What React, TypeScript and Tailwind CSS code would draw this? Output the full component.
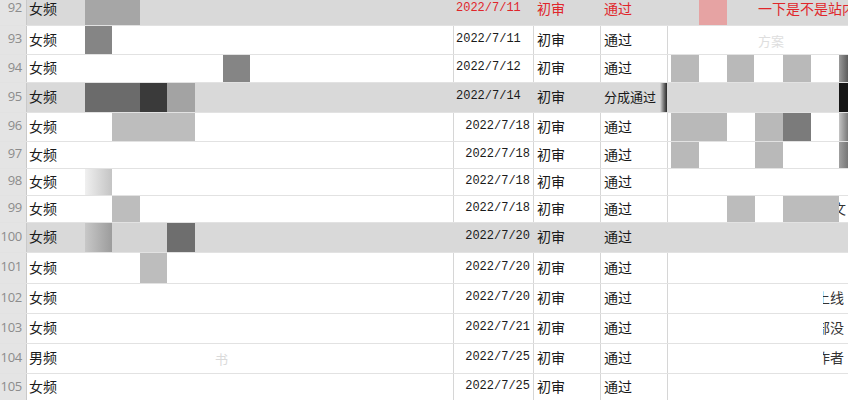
import React from "react";

type Seg = { w: string; c: string; t?: string };

type Row = {
    n: number;
    h: string;
    cat: string;
    date: string;
    stage: string;
    result: string;
    hl?: boolean;
    red?: boolean;
    dateLeft?: boolean;
    mid: Seg[];
    right: Seg[];
    tail?: string;
    edge?: boolean;
};

const rows: Row[] = [
    {
        n: 92, h: "h-[33px]", cat: "女频", date: "2022/7/11", stage: "初审", result: "通过", hl: true, red: true, dateLeft: true,
        mid: [{w: "w-[55px]", c: "bg-[#a6a6a6]"}],
        right: [{w: "w-[31px]", c: ""}, {w: "w-[28px]", c: "bg-[#e6a3a3]"}, {w: "w-[31px]", c: ""}],
        tail: "一下是不是站内",
    },
    {
        n: 93, h: "h-[29px]", cat: "女频", date: "2022/7/11", stage: "初审", result: "通过", dateLeft: true,
        mid: [{w: "w-[27px]", c: "bg-[#858585]"}],
        right: [{w: "w-[90px]", c: ""}, {w: "w-[40px]", c: "text-[#dedede] text-[11px]", t: "方案"}],
    },
    {
        n: 94, h: "h-[28px]", cat: "女频", date: "2022/7/12", stage: "初审", result: "通过", dateLeft: true,
        mid: [{w: "w-[138px]", c: ""}, {w: "w-[27px]", c: "bg-[#858585]"}],
        right: [
            {w: "w-[3px]", c: ""}, {w: "w-[28px]", c: "bg-[#b9b9b9]"}, {w: "w-[28px]", c: ""},
            {w: "w-[27px]", c: "bg-[#b9b9b9]"}, {w: "w-[29px]", c: ""}, {w: "w-[28px]", c: "bg-[#b9b9b9]"},
            {w: "w-[28px]", c: ""}, {w: "flex-1", c: "bg-gradient-to-r from-[#9a9a9a] to-[#5c5c5c]"},
        ],
    },
    {
        n: 95, h: "h-[30px]", cat: "女频", date: "2022/7/14", stage: "初审", result: "分成通过", hl: true, dateLeft: true, edge: true,
        mid: [{w: "w-[55px]", c: "bg-[#6b6b6b]"}, {w: "w-[27px]", c: "bg-[#3a3a3a]"}, {w: "w-[28px]", c: "bg-[#a3a3a3]"}],
        right: [{w: "w-[171px]", c: ""}, {w: "flex-1", c: "bg-[#151515]"}],
    },
    {
        n: 96, h: "h-[29px]", cat: "女频", date: "2022/7/18", stage: "初审", result: "通过",
        mid: [{w: "w-[27px]", c: ""}, {w: "w-[83px]", c: "bg-[#bdbdbd]"}],
        right: [
            {w: "w-[3px]", c: ""}, {w: "w-[56px]", c: "bg-[#b9b9b9]"}, {w: "w-[28px]", c: ""},
            {w: "w-[28px]", c: "bg-[#b9b9b9]"}, {w: "w-[28px]", c: "bg-[#7b7b7b]"}, {w: "w-[28px]", c: ""},
            {w: "flex-1", c: "bg-gradient-to-r from-[#c4c4c4] to-[#7a7a7a]"},
        ],
    },
    {
        n: 97, h: "h-[27px]", cat: "女频", date: "2022/7/18", stage: "初审", result: "通过",
        mid: [],
        right: [
            {w: "w-[3px]", c: ""}, {w: "w-[28px]", c: "bg-[#b9b9b9]"}, {w: "w-[56px]", c: ""},
            {w: "w-[28px]", c: "bg-[#b9b9b9]"}, {w: "w-[56px]", c: ""},
            {w: "flex-1", c: "bg-gradient-to-r from-[#a0a0a0] to-[#777777]"},
        ],
    },
    {
        n: 98, h: "h-[27px]", cat: "女频", date: "2022/7/18", stage: "初审", result: "通过",
        mid: [{w: "w-[27px]", c: "bg-gradient-to-r from-[#f0f0f0] to-[#c4c4c4]"}],
        right: [],
    },
    {
        n: 99, h: "h-[27px]", cat: "女频", date: "2022/7/18", stage: "初审", result: "通过",
        mid: [{w: "w-[27px]", c: ""}, {w: "w-[28px]", c: "bg-[#bdbdbd]"}],
        right: [
            {w: "w-[59px]", c: ""}, {w: "w-[28px]", c: "bg-[#bcbcbc]"}, {w: "w-[28px]", c: ""},
            {w: "w-[56px]", c: "bg-[#bcbcbc]"},
        ],
        tail: "文",
    },
    {
        n: 100, h: "h-[30px]", cat: "女频", date: "2022/7/20", stage: "初审", result: "通过", hl: true,
        mid: [{w: "w-[27px]", c: "bg-gradient-to-r from-[#c8c8c8] to-[#9c9c9c]"}, {w: "w-[55px]", c: "bg-[#d4d4d4]"}, {w: "w-[28px]", c: "bg-[#6e6e6e]"}],
        right: [],
    },
    {
        n: 101, h: "h-[31px]", cat: "女频", date: "2022/7/20", stage: "初审", result: "通过",
        mid: [{w: "w-[55px]", c: ""}, {w: "w-[27px]", c: "bg-[#bdbdbd]"}],
        right: [],
    },
    {
        n: 102, h: "h-[30px]", cat: "女频", date: "2022/7/20", stage: "初审", result: "通过",
        mid: [], right: [{w: "w-[155px]", c: ""}], tail: "上线",
    },
    {
        n: 103, h: "h-[30px]", cat: "女频", date: "2022/7/21", stage: "初审", result: "通过",
        mid: [], right: [{w: "w-[155px]", c: ""}], tail: "部没",
    },
    {
        n: 104, h: "h-[30px]", cat: "男频", date: "2022/7/25", stage: "初审", result: "通过",
        mid: [{w: "w-[130px]", c: ""}, {w: "w-[20px]", c: "text-[#dadada]", t: "书"}],
        right: [{w: "w-[155px]", c: ""}], tail: "作者",
    },
    {
        n: 105, h: "h-[28px]", cat: "女频", date: "2022/7/25", stage: "初审", result: "通过",
        mid: [], right: [],
    },
];

const Segs = ({segs}: { segs: Seg[] }) => (
    <>
        {segs.map((s, i) => (
            <div key={i} className={`${s.w} ${s.c} h-full shrink-0 flex items-center text-[13px] overflow-hidden`}>
                {s.t}
            </div>
        ))}
    </>
);

const SheetRow = ({r}: { r: Row }) => {
    const bg = r.hl ? "bg-[#d9d9d9]" : "bg-white";
    const ink = r.red ? "text-[#e0262b]" : "text-[#1a1a1a]";
    const vline = r.hl ? "border-transparent" : "border-[#d6d6d6]";
    return (
        <div className={`flex ${r.h} border-b border-[#e2e2e2] ${bg}`}>
            <div className="w-[27px] shrink-0 bg-[#e4e4e4] border-r border-[#c9c9c9] flex items-center justify-end pr-[4px] pb-[3px] text-[13px] text-[#8c8c8c] font-['Open_Sans',sans-serif] tracking-[-0.3px]">
                {r.n}
            </div>
            <div className="w-[58px] shrink-0 flex items-center pl-[2px] pb-[3px] text-[14px] text-[#1a1a1a]">
                {r.cat}
            </div>
            <div className="w-[368px] shrink-0 flex h-full text-[#d0d0d0]">
                <Segs segs={r.mid}/>
            </div>
            <div
                className={`w-[80px] shrink-0 border-l ${vline} flex items-center pb-[3px] font-['Liberation_Mono',monospace] text-[12px] ${ink} ${r.dateLeft ? "justify-start pl-[2px]" : "justify-end pr-[3px]"}`}>
                {r.date}
            </div>
            <div className={`w-[67px] shrink-0 border-l ${vline} flex items-center pl-[3px] pb-[3px] text-[14px] ${ink}`}>
                {r.stage}
            </div>
            <div className={`w-[67px] shrink-0 border-l ${vline} flex items-center text-[14px] whitespace-nowrap overflow-hidden ${ink}`}>
                <span className={`pl-[3px] pb-[3px] ${r.edge ? "text-[13px]" : ""}`}>{r.result}</span>
                {r.edge && <div className="ml-auto w-[7px] h-full shrink-0 bg-gradient-to-r from-[#d9d9d9] to-[#2a2a2a]"/>}
            </div>
            <div className={`flex-1 min-w-0 border-l ${vline} flex h-full overflow-hidden`}>
                <Segs segs={r.right}/>
                {r.tail && (
                    <div className={`flex items-center pb-[3px] whitespace-nowrap overflow-hidden text-[14px] ${r.red ? "text-[#e0262b]" : "text-[#333333]"}`}>
                        <span className={r.red ? "" : "-ml-[7px]"}>{r.tail}</span>
                    </div>
                )}
            </div>
        </div>
    );
};

const App = () => {
    return (
        <div className="w-[848px] h-[400px] overflow-hidden bg-white font-['Noto_Sans_CJK_SC','Noto_Sans',sans-serif] leading-none">
            <div className="-mt-[7px]">
                {rows.map((r) => (
                    <SheetRow key={r.n} r={r}/>
                ))}
            </div>
        </div>
    );
};

export default App;
